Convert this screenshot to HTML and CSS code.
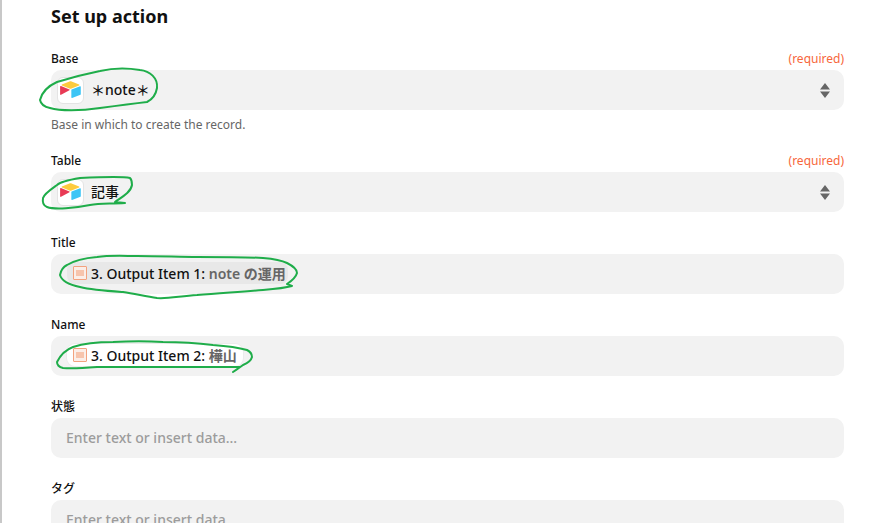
FILE: index.html
```html
<!DOCTYPE html>
<html lang="ja">
<head>
    <meta charset="UTF-8">
    <meta name="viewport" content="width=device-width, initial-scale=1.0">
    <title>Set up action</title>
    <link rel="stylesheet" href="styles.css">
</head>
<body>

<div class="panel">
    <h1>Set up action</h1>

    <div class="field base-field">
        <div class="label-row"><label>Base</label><span class="required">(required)</span></div>
        <div class="input select">
            <span class="app-icon">
                <svg width="21" height="18" viewBox="0 0 20 17"><path d="M9 .3 1.8 3.2c-.4.2-.4.7 0 .9L9 7c.7.3 1.400.3 2 0l7.200-2.900c.4-.2.4-.7 0-.9L11 .3C10.400 0 9.600 0 9 .3z" fill="#fdcb3e"/><path d="M10.800 8.500v7.200c0 .3.400.6.700.4l8-3.100c.2-.1.300-.3.300-.5V5.300c0-.3-.4-.6-.7-.4l-8 3.100c-.2.100-.3.300-.3.500z" fill="#3dc5f5"/><path d="M9 8.800 1 13.100c-.4.200-.9-.1-.9-.5V5.300c0-.2.100-.3.200-.4.100 0 .2-.1.300-.1h.3L9 8.100c.3.200.3.500 0 .7z" fill="#e83a55"/></svg>
            </span>
            <span class="value">＊note＊</span>
            <svg class="stepper" width="10" height="15" viewBox="0 0 10 15"><path d="M5 0l5 6.500H0zM0 8.500h10L5 15z" fill="#666"/></svg>
        </div>
        <p class="hint">Base in which to create the record.</p>
    </div>

    <div class="field">
        <div class="label-row"><label>Table</label><span class="required">(required)</span></div>
        <div class="input select">
            <span class="app-icon">
                <svg width="21" height="18" viewBox="0 0 20 17"><path d="M9 .3 1.8 3.2c-.4.2-.4.7 0 .9L9 7c.7.3 1.400.3 2 0l7.200-2.900c.4-.2.4-.7 0-.9L11 .3C10.400 0 9.600 0 9 .3z" fill="#fdcb3e"/><path d="M10.800 8.500v7.200c0 .3.400.6.700.4l8-3.100c.2-.1.300-.3.300-.5V5.300c0-.3-.4-.6-.7-.4l-8 3.100c-.2.100-.3.300-.3.500z" fill="#3dc5f5"/><path d="M9 8.800 1 13.100c-.4.200-.9-.1-.9-.5V5.300c0-.2.100-.3.200-.4.100 0 .2-.1.300-.1h.3L9 8.100c.3.200.3.500 0 .7z" fill="#e83a55"/></svg>
            </span>
            <span class="value">記事</span>
            <svg class="stepper" width="10" height="15" viewBox="0 0 10 15"><path d="M5 0l5 6.500H0zM0 8.500h10L5 15z" fill="#666"/></svg>
        </div>
    </div>

    <div class="field">
        <div class="label-row"><label>Title</label></div>
        <div class="input">
            <span class="pill pill-grey">
                <span class="step-icon"><span></span></span>
                <span>3. Output Item 1: <em>note の運用</em></span>
            </span>
        </div>
    </div>

    <div class="field">
        <div class="label-row"><label>Name</label></div>
        <div class="input">
            <span class="pill pill-white">
                <span class="step-icon"><span></span></span>
                <span>3. Output Item 2: <em>樺山</em></span>
            </span>
        </div>
    </div>

    <div class="field">
        <div class="label-row"><label>状態</label></div>
        <div class="input placeholder">Enter text or insert data...</div>
    </div>

    <div class="field">
        <div class="label-row"><label>タグ</label></div>
        <div class="input placeholder">Enter text or insert data...</div>
    </div>
</div>

<!-- hand drawn marks on top of the form -->
<svg class="marks" width="893" height="523" viewBox="0 0 893 523" fill="none" stroke="#1fad4a" stroke-width="2" stroke-linecap="round" stroke-linejoin="round">
    <path d="M157 88C158 78 150 71 140 70C128 68 113 68 100 71C85 74 70 78 57 82C48 86 42 92 40 100C41 105 45 107 50 108C60 111 80 111 100 108C115 106 130 104 147 102C153 99 156 94 157 88"/>
    <path d="M130 178C122 176 100 177 80 178C68 180 60 182 57 185C50 190 44 194 43 198C42 204 44 206 47 207C55 210 75 208 90 205C100 203 110 204 125 203L115 202C122 197 131 192 132 185C132 181 131 179 130 178"/>
    <path d="M60 275C61 270 63 267 67 265C75 260 85 258 97 257C110 255 125 256 137 256C160 256 180 257 197 257C220 257 245 257 263 258C275 259 283 261 287 263C293 266 297 270 297 273C296 277 293 280 287 284L292 286C285 288 275 289 263 290C240 292 220 293 197 295C180 296 168 299 157 298C145 296 135 294 123 292C108 291 92 290 80 287C70 285 62 282 60 275"/>
    <path d="M57 362C60 356 65 350 73 347C85 343 100 342 113 342C130 341 148 341 163 342C180 342 197 343 213 345C227 346 240 348 247 350C251 352 252 354 252 357C251 361 248 363 243 365C240 367 238 369 233 372L240 367C225 367 212 367 197 367C180 367 163 367 147 367C130 367 113 367 97 367C85 368 72 369 63 368C59 367 57 365 57 362"/>
</svg>

</body>
</html>
```

FILE: styles.css
```css
html, body {
    height: 100%;
    overflow: hidden;
}
body {
    margin: 0;
    position: relative;
    background: #fff;
    font-family: "Noto Sans", "Noto Sans CJK JP", sans-serif;
    color: #111;
    border-left: 2px solid #c8c8c8;
}
.panel {
    width: 793px;
    padding: 5px 0 0 49px;
}
h1 {
    margin: 0 0 22px;
    font-size: 18px;
    line-height: 22px;
    font-weight: 700;
}
.field {
    margin-bottom: 21px;
}
.base-field {
    margin-bottom: 17px;
}
.label-row {
    display: flex;
    justify-content: space-between;
    align-items: center;
    height: 18px;
    margin-bottom: 3px;
}
label {
    font-size: 12px;
    font-weight: 500;
}
.required {
    font-size: 12px;
    color: #f7673b;
}
.input {
    display: flex;
    align-items: center;
    height: 40px;
    padding: 0 15px;
    box-sizing: border-box;
    background: #f2f2f2;
    border-radius: 10px;
    font-size: 14px;
}
.select {
    padding: 0 14px 0 6px;
}
.app-icon {
    display: flex;
    align-items: center;
    justify-content: center;
    width: 27px;
    height: 27px;
    box-sizing: border-box;
    background: #fff;
    border: 1px solid #e4e4e4;
    border-radius: 6px;
    margin-right: 7px;
}
.value {
    margin-bottom: 2px;
    font-weight: 500;
    color: #111;
}
.stepper {
    margin-left: auto;
}
.hint {
    margin: 6px 0 0;
    font-size: 12px;
    line-height: 18px;
    color: #666;
}
.pill {
    display: inline-flex;
    align-items: center;
    gap: 4px;
    height: 22px;
    margin: 0 0 2px 1px;
    padding: 0 6px;
    border-radius: 8px;
    font-weight: 500;
    white-space: nowrap;
}
.pill em {
    font-style: normal;
    font-weight: 600;
    color: #666;
}
.pill-grey {
    padding-right: 2px;
    background: #e8e8e8;
}
.pill-white {
    background: #fff;
    box-shadow: 0 0 0 1px #ececec;
}
.step-icon {
    display: flex;
    align-items: center;
    justify-content: center;
    width: 14px;
    height: 14px;
    box-sizing: border-box;
    background: #fbeee8;
    border: 1px solid #f3a27e;
    border-radius: 1px;
}
.step-icon span {
    width: 8px;
    height: 6px;
    background: #f7c4ac;
}
.placeholder {
    padding-bottom: 2px;
    font-weight: 500;
    color: #9c9c9c;
}
.marks {
    position: absolute;
    left: -2px;
    top: 0;
    pointer-events: none;
}
```
